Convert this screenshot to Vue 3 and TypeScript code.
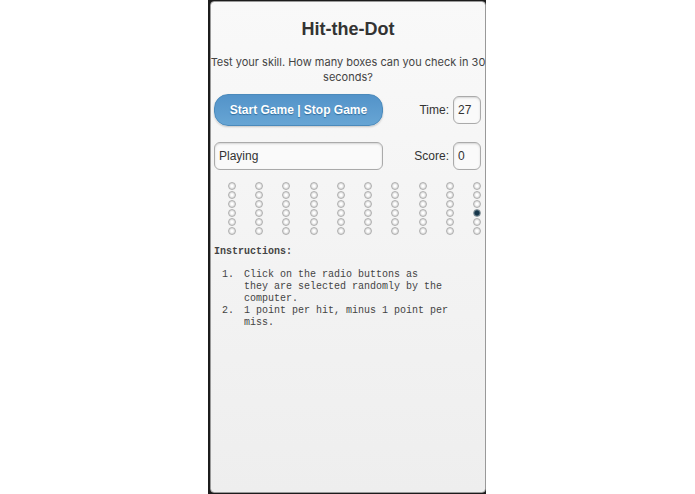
<script setup lang="ts">
import { onBeforeUnmount, ref } from 'vue'

const ROWS = 6
const COLUMNS = 10
const TOTAL = ROWS * COLUMNS

const time = ref(27)
const score = ref(0)
const status = ref('Playing')
const active = ref(39)
const running = ref(true)
let timer: number | undefined

function pickDot(): void {
  active.value = Math.floor(Math.random() * TOTAL)
}

function stopGame(): void {
  window.clearInterval(timer)
  timer = undefined
  running.value = false
  status.value = 'Game Over'
}

function toggleGame(): void {
  if (running.value) {
    stopGame()
    return
  }
  time.value = 30
  score.value = 0
  status.value = 'Playing'
  running.value = true
  pickDot()
  timer = window.setInterval(() => {
    time.value -= 1
    if (time.value <= 0) stopGame()
  }, 1000)
}

function hit(index: number): void {
  if (!running.value) return
  score.value += index === active.value ? 1 : -1
  pickDot()
}

onBeforeUnmount(() => window.clearInterval(timer))
</script>

<template>
  <div class="page">
    <main class="phone">
      <div class="screen">
        <h1>Hit-the-Dot</h1>
        <p class="intro">Test your skill. How many boxes can you check in 30 seconds?</p>

        <div class="row">
          <button type="button" class="start" @click="toggleGame">Start Game | Stop Game</button>
          <label for="time">Time:</label>
          <input id="time" class="field" type="text" readonly :value="time" />
        </div>
        <div class="row">
          <input class="field" type="text" readonly aria-label="Status" :value="status" />
          <label for="score">Score:</label>
          <input id="score" class="field" type="text" readonly :value="score" />
        </div>

        <div class="dots">
          <input
            v-for="n in TOTAL"
            :key="n"
            class="dot"
            type="radio"
            name="dot"
            :aria-label="`Dot ${n}`"
            :checked="n - 1 === active"
            @click.prevent="hit(n - 1)"
          />
        </div>

        <section class="instructions">
          <h2>Instructions:</h2>
          <ol>
            <li>Click on the radio buttons as<br />they are selected randomly by the<br />computer.</li>
            <li>1 point per hit, minus 1 point per<br />miss.</li>
          </ol>
        </section>
      </div>
    </main>
  </div>
</template>

<style>
body {
  margin: 0;
  background: #fff;
}
</style>

<style scoped>
.page {
  display: grid;
  grid-template-columns: 3fr minmax(278px, 4fr) 3fr;
  box-sizing: border-box;
  min-height: 100vh;
  padding-right: 1px;
  font-family: "Liberation Sans", Arial, sans-serif;
  color: #333;
}

.phone {
  grid-column: 2;
  display: flex;
  box-sizing: border-box;
  padding: 1px 0 1px 2px;
  background: #1c1c1c;
}

.screen {
  flex: 1;
  min-width: 0;
  box-sizing: border-box;
  border: 1px solid #999;
  border-radius: 4px;
  background: linear-gradient(#f9f9f9, #eee);
}

h1 {
  margin: 16px 0 0;
  font-size: 18px;
  line-height: 22px;
  text-align: center;
}

.intro {
  margin: 15px -1px 9px;
  color: #444;
  font-family: Inter, "Liberation Sans", sans-serif;
  font-size: 11px;
  line-height: 15px;
  text-align: center;
}

.row {
  display: grid;
  grid-template-columns: 1fr 62px 28px;
  column-gap: 4px;
  align-items: center;
  height: 32px;
  margin: 0 4px 14px 3px;
}

.row label {
  font-size: 12px;
  text-align: right;
}

.start {
  height: 32px;
  padding: 0;
  border: 1px solid #4b8abb;
  border-radius: 14px;
  background: linear-gradient(#5393c9, #67a5d4);
  box-shadow: 0 1px 2px rgba(0, 0, 0, 0.2);
  color: #fff;
  font: bold 12px "Liberation Sans", Arial, sans-serif;
  text-shadow: 0 1px 1px #2f6d9d;
}

.field {
  box-sizing: border-box;
  width: 100%;
  min-width: 0;
  height: 28px;
  padding: 0 4px;
  border: 1px solid #aaa;
  border-radius: 6px;
  background: #fafafa;
  box-shadow: inset 0 1px 2px rgba(0, 0, 0, 0.15);
  color: #333;
  font: 12px "Liberation Sans", Arial, sans-serif;
}

.dots {
  display: grid;
  grid-template-columns: repeat(10, 8px);
  grid-auto-rows: 9px;
  justify-content: space-between;
  align-items: center;
  margin: -5px 4px 0 17px;
}

.dot {
  appearance: none;
  box-sizing: border-box;
  width: 8px;
  height: 8px;
  margin: 0;
  border: 1px solid #b0b0b0;
  border-radius: 50%;
  background: radial-gradient(#fff 20%, #c4c4c4);
}

.dot:checked {
  border-color: #8a969c;
  background: radial-gradient(#16364a 45%, #7d9aa8);
}

.instructions {
  margin: 11px 3px 0;
  color: #444;
  font: 10px/12px "Liberation Mono", "Courier New", monospace;
}

.instructions h2 {
  margin: 0;
  font-size: 10px;
  line-height: 12px;
}

.instructions ol {
  margin: 11px 0 0;
  padding: 0 0 0 26px;
}

.instructions li {
  padding-left: 4px;
}
</style>
